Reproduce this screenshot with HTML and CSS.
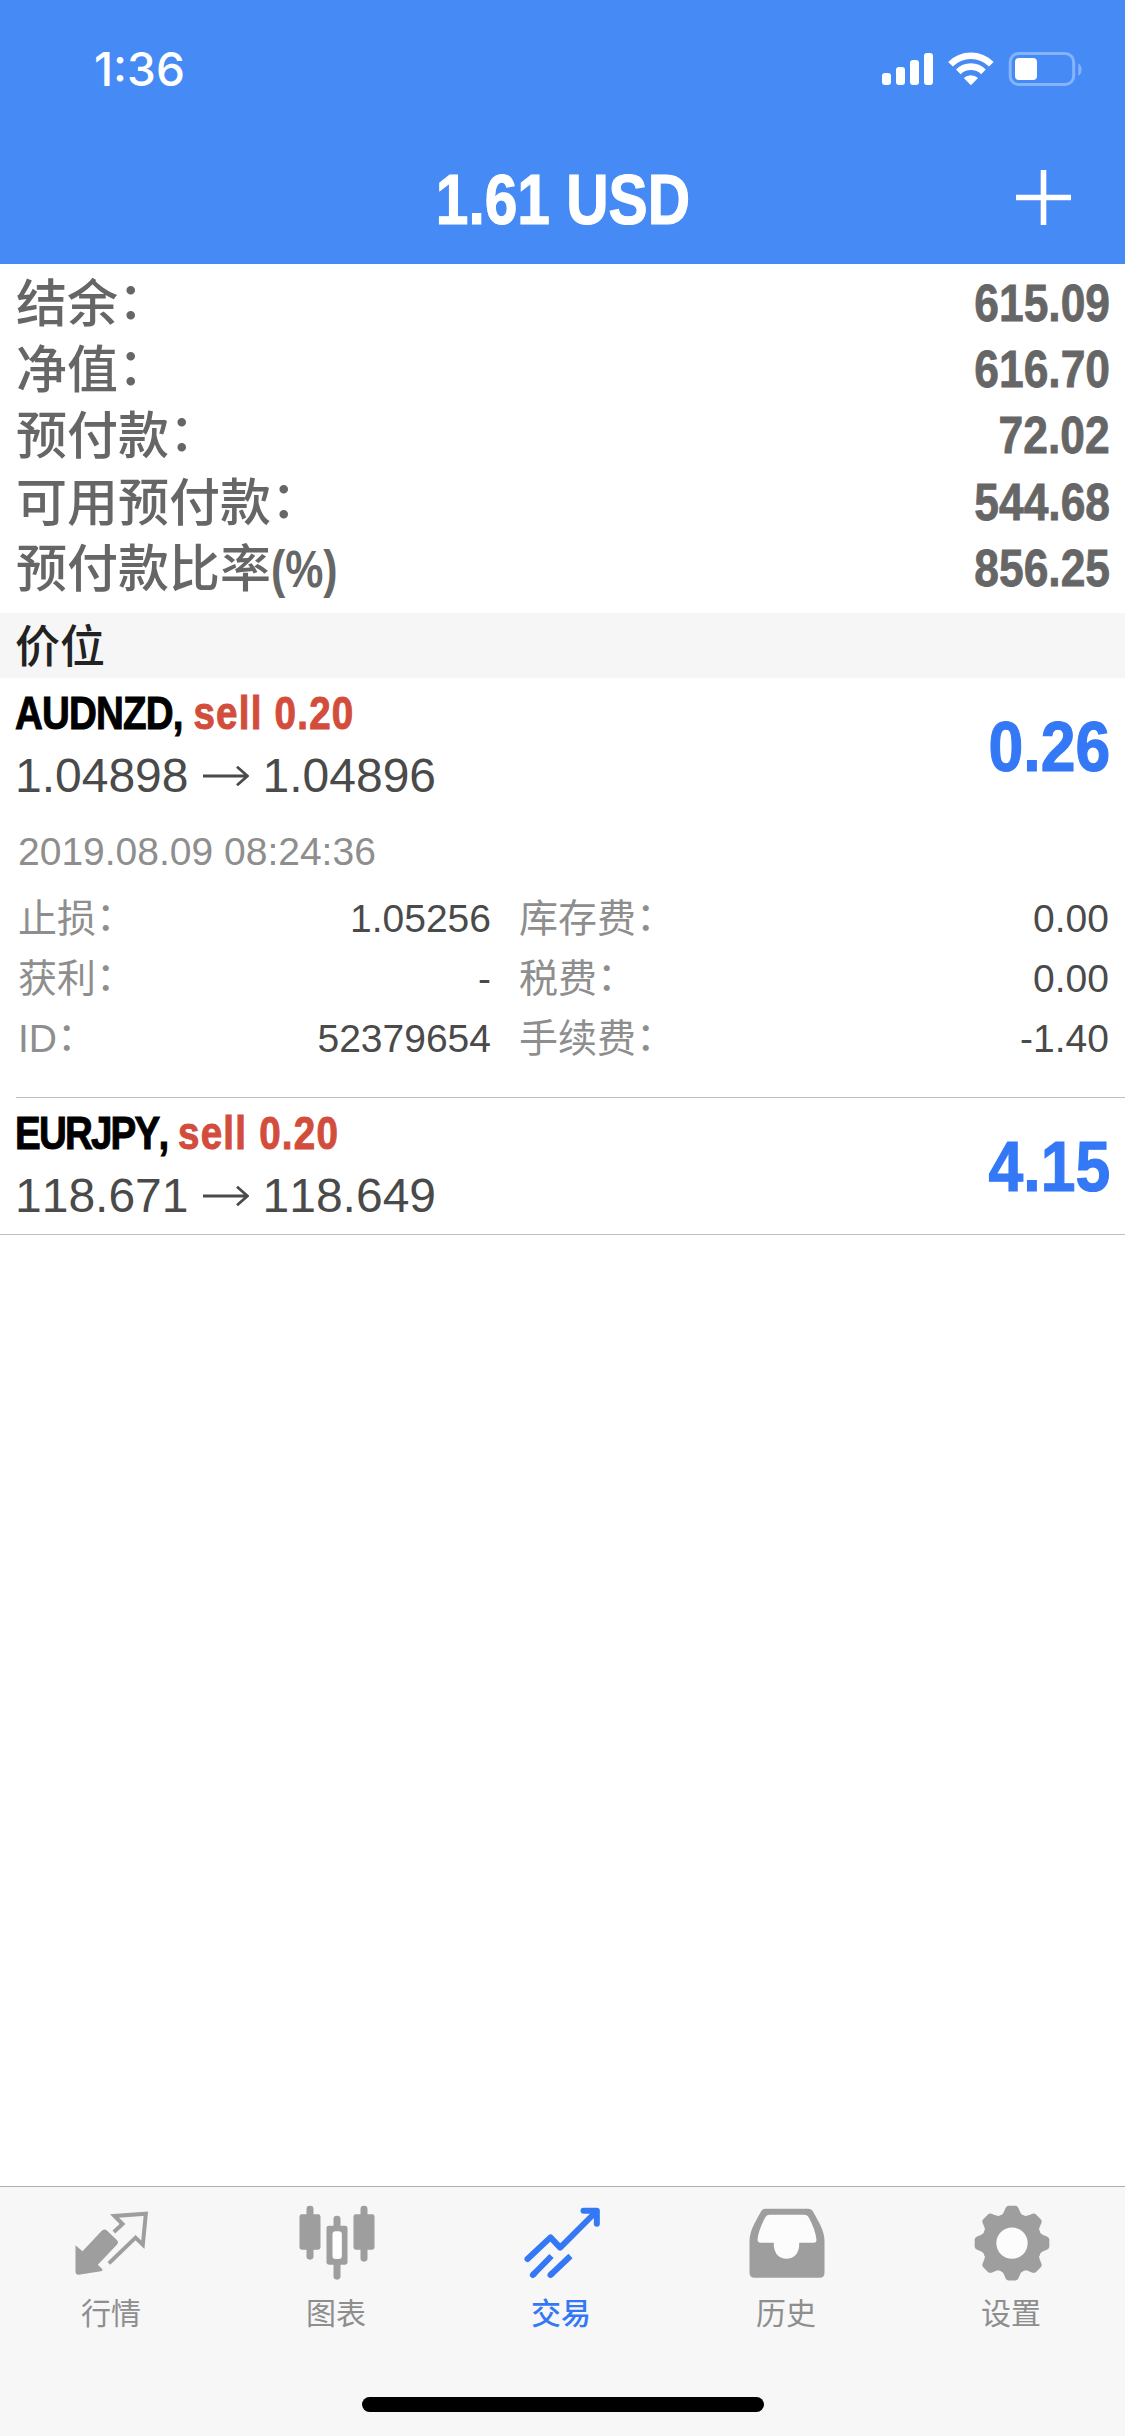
FILE: index.html
```html
<!DOCTYPE html>
<html lang="zh-CN">
<head>
<meta charset="utf-8">
<title>交易</title>
<link rel="stylesheet" href="styles.css">
</head>
<body>
<div class="app">
  <header class="header">
    <div class="status">
      <span class="time">1:36</span>
      <svg class="status-icons" viewBox="0 0 202 36" fill="#fff">
        <rect x="0" y="22" width="9" height="12" rx="3"/>
        <rect x="14" y="16" width="9" height="18" rx="3"/>
        <rect x="28" y="9" width="9" height="25" rx="3"/>
        <rect x="42" y="2" width="9" height="32" rx="3"/>
        <g fill="none" stroke="#fff" stroke-width="6.6">
          <path d="M68.5 13.3a28.5 28.5 0 0 1 40.8 0"/>
          <path d="M76.3 20.8a18 18 0 0 1 25.2 0"/>
        </g>
        <path d="M81.8 27a10.5 10.5 0 0 1 14.2 0L88.9 34.3z"/>
        <rect x="128.2" y="2.5" width="63.5" height="31" rx="8.5" fill="none" stroke="#86b4fb" stroke-width="3"/>
        <path d="M196.300 12.500v12.300c4.400-2 4.400-10.300 0-12.300z" fill="#86b4fb"/>
        <rect x="133" y="7" width="22" height="22" rx="4"/>
      </svg>
    </div>
    <div class="nav">
      <h1 class="title">1.61 USD</h1>
      <svg class="plus" viewBox="0 0 55 55"><path d="M27.500 0v55M0 27.500h55" stroke="#fff" stroke-width="5.600"/></svg>
    </div>
  </header>

  <dl class="summary">
    <div class="sum-row"><dt>结余<i class="colon">：</i></dt><dd>615.09</dd></div>
    <div class="sum-row"><dt>净值<i class="colon">：</i></dt><dd>616.70</dd></div>
    <div class="sum-row"><dt>预付款<i class="colon">：</i></dt><dd>72.02</dd></div>
    <div class="sum-row"><dt>可用预付款<i class="colon">：</i></dt><dd>544.68</dd></div>
    <div class="sum-row"><dt>预付款比率<span class="pct">(%)</span></dt><dd>856.25</dd></div>
  </dl>

  <h2 class="section">价位</h2>

  <main class="positions">
    <article class="position">
      <div class="main-row">
        <div class="deal">
          <div class="symbol"><span class="name">AUDNZD,</span> <span class="side">sell 0.20</span></div>
          <div class="prices"><span>1.04898</span><svg class="arrow" viewBox="0 0 46 20"><path d="M0 10h44M34 .8L44.500 10L34 19.200"/></svg><span>1.04896</span></div>
        </div>
        <div class="profit">0.26</div>
      </div>
      <div class="date">2019.08.09 08:24:36</div>
      <div class="details">
        <div class="d-row"><span class="label">止损<i class="colon">：</i></span><span>1.05256</span></div>
        <div class="d-row"><span class="label">库存费<i class="colon">：</i></span><span>0.00</span></div>
        <div class="d-row"><span class="label">获利<i class="colon">：</i></span><span>-</span></div>
        <div class="d-row"><span class="label">税费<i class="colon">：</i></span><span>0.00</span></div>
        <div class="d-row"><span class="label">ID<i class="colon">：</i></span><span>52379654</span></div>
        <div class="d-row"><span class="label">手续费<i class="colon">：</i></span><span>-1.40</span></div>
      </div>
    </article>
    <article class="position">
      <div class="main-row">
        <div class="deal">
          <div class="symbol"><span class="name tight">EURJPY,</span> <span class="side">sell 0.20</span></div>
          <div class="prices"><span>118.671</span><svg class="arrow" viewBox="0 0 46 20"><path d="M0 10h44M34 .8L44.500 10L34 19.200"/></svg><span>118.649</span></div>
        </div>
        <div class="profit">4.15</div>
      </div>
    </article>
  </main>

  <nav class="tabbar">
    <div class="tabs">
      <div class="tab">
        <svg viewBox="97.5 70 240 240">
          <path fill="currentColor" d="M184 153q8-7 16 0l29 28q7 7 0 14l-57 60 13 13q3 5-4 7l-66 10q-10 0-10-9v-79l21 18z"/>
          <path fill="none" stroke="currentColor" stroke-width="12" d="M220 157l26-24-24-24 94-7-9 93-22-21-80 77"/>
        </svg>
        <span>行情</span>
      </div>
      <div class="tab">
        <svg viewBox="772.5 70 240 240">
          <g fill="currentColor">
            <rect x="798" y="78" width="21" height="162" rx="10"/><rect x="777" y="104" width="63" height="106" rx="7"/>
            <rect x="960" y="78" width="21" height="168" rx="10"/><rect x="939" y="104" width="63" height="106" rx="7"/>
            <rect x="879" y="108" width="21" height="192" rx="10"/><rect x="858" y="138" width="63" height="117" rx="7"/>
          </g>
          <rect x="876" y="155" width="28" height="83" rx="9" fill="#fff"/>
        </svg>
        <span>图表</span>
      </div>
      <div class="tab active">
        <svg viewBox="127.500 70 240 240" fill="none" stroke="currentColor" stroke-width="18" stroke-linejoin="round">
          <path stroke-linecap="round" d="M141 238l69-65 29 31 107-107M309 93h40v39"/>
          <path d="M157 286l56-57M210 286l60-57"/>
          <path stroke-linecap="round" d="M157 286l4-4M210 286l4-4"/>
        </svg>
        <span>交易</span>
      </div>
      <div class="tab">
        <svg viewBox="802.5 70 240 240">
          <path fill="currentColor" d="M856 87h127q10 0 15 9l20 37q14 29 14 50v96q0 15-15 15H822q-15 0-15-15v-96q0-21 14-50l20-37q5-9 15-9z"/>
          <path fill="#fcfcfc" d="M868 105h103q9 0 13 7 22 40 24 70 0 7-7 7h-45v10q-4 37-38 38-34-1-38-38v-10h-41q-7 0-8-7 2-30 24-70 4-7 13-7z"/>
        </svg>
        <span>历史</span>
      </div>
      <div class="tab">
        <svg viewBox="457.500 70 240 240">
          <g fill="currentColor" transform="translate(574.500 190.500)">
            <circle r="90"/>
            <path id="tooth" d="M-38-82q9-1 13-10l6-14q3-6 9-6h20q6 0 9 6l6 14q4 9 13 10V0h-76z"/>
            <use href="#tooth" transform="rotate(45)"/><use href="#tooth" transform="rotate(90)"/>
            <use href="#tooth" transform="rotate(135)"/><use href="#tooth" transform="rotate(180)"/>
            <use href="#tooth" transform="rotate(225)"/><use href="#tooth" transform="rotate(270)"/>
            <use href="#tooth" transform="rotate(315)"/>
            <circle r="47" fill="#fcfcfc"/>
          </g>
        </svg>
        <span>设置</span>
      </div>
    </div>
    <div class="home"></div>
  </nav>
</div>
</body>
</html>
```
FILE: styles.css
```css
* { box-sizing: border-box; margin: 0; padding: 0; }
body {
  width: 1125px;
  background: #fff;
  font-family: "Liberation Sans", "Noto Sans CJK SC", sans-serif;
  font-kerning: none;
}
.app { display: flex; flex-direction: column; height: 2436px; }
svg { display: block; }

.header { height: 264px; background: #468af5; color: #fff; }
.status {
  display: flex; justify-content: space-between; align-items: flex-start;
  height: 132px; padding: 42px 41px 0 94px;
}
.time { font: 500 46px/55px Inter, sans-serif; }
.status-icons { width: 202px; height: 36px; margin-top: 9px; }
.nav {
  display: grid; grid-template-columns: 1fr auto 1fr; align-items: center;
  height: 132px; padding: 0 54px 2px;
}
/* Bold figures are condensed horizontally throughout */
.title {
  grid-column: 2; padding-top: 5px;
  font-weight: 700; font-size: 71px; line-height: 80px;
  -webkit-text-stroke: 1.200px;
  transform: scaleX(.826);
}
.plus { width: 55px; height: 55px; justify-self: end; }

.summary { height: 349px; padding: 7px 15px 0 16px; color: #666; }
.sum-row { display: flex; justify-content: space-between; height: 66.200px; line-height: 66.200px; font-size: 51px; }
.sum-row dt { padding-top: 1px; font-weight: 500; }
.sum-row dd { font-weight: 700; transform: scaleX(.87); transform-origin: right; -webkit-text-stroke: .8px; }
.pct { display: inline-block; line-height: 60px; font-weight: 700; transform: scaleX(.84); transform-origin: left; }
.colon { font-style: normal; line-height: 0; vertical-align: .05em; }

.section {
  height: 65px; padding-left: 15px; background: #f6f6f6; color: #222;
  font-weight: 500; font-size: 45px; line-height: 69px;
}

.positions { border-bottom: 1px solid #bfbfc2; }
.position + .position { margin-left: 16px; border-top: 1px solid #bfbfc2; }
.position + .position .main-row { padding-left: 0; }
.main-row { display: flex; justify-content: space-between; align-items: center; height: 136px; padding: 0 15px 0 16px; }
.deal { padding-bottom: 4px; }
.symbol {
  margin-left: -1px;
  font-weight: 700; font-size: 47px; line-height: 63px; color: #000;
  -webkit-text-stroke: 1px;
  transform: scaleX(.82); transform-origin: left;
}
.name { letter-spacing: -1px; }
.name.tight { letter-spacing: -2.200px; }
.side { color: #d34d3c; letter-spacing: 1.500px; }
.prices { display: flex; align-items: center; gap: 14px; margin-left: -1px; font-size: 48px; line-height: 63px; color: #4a4a4a; }
.arrow { width: 46px; height: 20px; fill: none; stroke: #4a4a4a; stroke-width: 2.800; }
.profit {
  padding-top: 2px;
  font-weight: 700; font-size: 71px; line-height: 80px; color: #3478f6;
  -webkit-text-stroke: 1.200px;
  transform: scaleX(.88); transform-origin: right;
}
.date { padding: 15px 18px 0; font-size: 39px; line-height: 46px; color: #8e8e8e; }
.details {
  display: grid; grid-template-columns: 473px 590px; column-gap: 28px;
  height: 222px; padding: 14px 16px 0 18px; align-content: start;
}
.d-row { display: flex; justify-content: space-between; height: 60.200px; font-size: 39px; line-height: 60px; color: #4a4a4a; }
.label { color: #8e8e8e; }

.tabbar { margin-top: auto; height: 250px; border-top: 1px solid #adadad; background: #f7f7f7; }
.tabs { display: grid; grid-template-columns: repeat(5, 1fr); height: 210px; padding-top: 16px; }
.tab { display: flex; flex-direction: column; align-items: center; color: #9e9e9e; font: 400 30px/44px "Noto Sans CJK SC", sans-serif; }
.tab svg { width: 80px; height: 80px; margin-bottom: 6px; }
.tab span { padding-right: 3px; color: #8e8e8e; }
.tab.active, .tab.active span { color: #3478f6; }
.tab.active span { font-weight: 500; }
.home { width: 402px; height: 15px; margin: 0 auto; border-radius: 8px; background: #000; }
```
